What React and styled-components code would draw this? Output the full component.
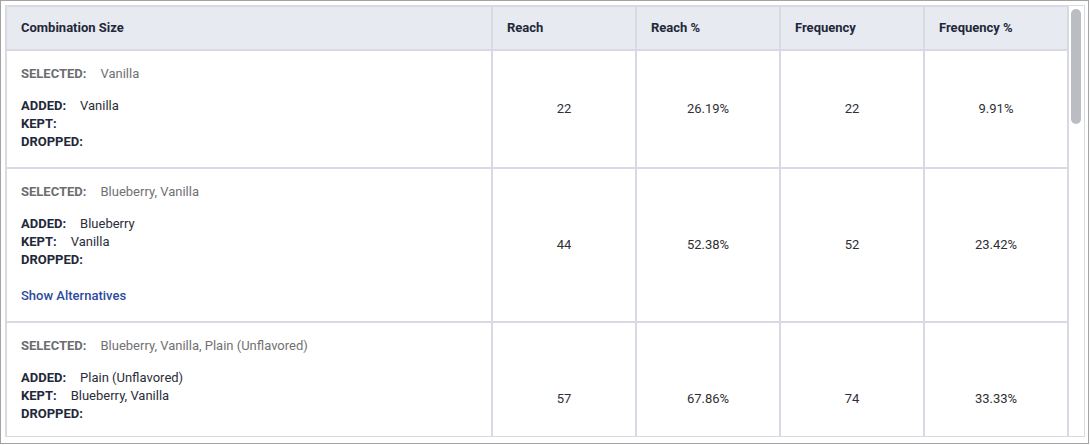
import React from "react";
import styled, { createGlobalStyle } from "styled-components";

const GlobalStyle = createGlobalStyle`
  *, *::before, *::after { box-sizing: border-box; }
  html, body { margin: 0; padding: 0; background: #ffffff; }
  body { font-family: Roboto, "Noto Sans", Arial, sans-serif; }
`;

const Frame = styled.div`
  width: 1089px;
  height: 444px;
  border: 1px solid #a3a3a3;
  padding: 4px 3px 6px 4px;
  background: #ffffff;
`;

const Panel = styled.div`
  display: flex;
  width: 1080px;
  height: 432px;
  border: 1px solid #d8d9e2;
`;

const Viewport = styled.div`
  flex: 1;
  overflow: hidden;
`;

const ScrollRail = styled.div`
  flex: 0 0 16px;
  border-left: 1px solid #d8d9e2;
  background: #ffffff;
  padding: 3px 0 0 2px;
`;

const ScrollThumb = styled.div`
  width: 10px;
  height: 115px;
  border-radius: 5px;
  background: #babdc1;
`;

const Table = styled.table`
  width: 1062px;
  table-layout: fixed;
  border-collapse: separate;
  border-spacing: 0;
  font-size: 13px;
  line-height: 18px;
`;

const HeadCell = styled.th`
  height: 44px;
  padding: 0 14px;
  border: 1px solid #d8d9e2;
  background: #e8eaf2;
  color: #232838;
  font-weight: 700;
  text-align: left;
  vertical-align: middle;
`;

const ComboCell = styled.td`
  padding: 14px 14px 16px;
  border: 1px solid #d8d9e2;
  vertical-align: top;
`;

const NumCell = styled.td`
  padding: 0 14px;
  border: 1px solid #d8d9e2;
  text-align: center;
  vertical-align: middle;
  color: #2f2f33;
`;

const SelectedLine = styled.div`
  color: #707174;
  margin-bottom: 14px;
`;

const Line = styled.div`
  color: #2a2e3b;
`;

const Label = styled.span`
  font-weight: 700;
  margin-right: 14px;
  color: ${(p) => (p.$muted ? "#6c6d70" : "#222839")};
`;

const AltLink = styled.a`
  display: inline-block;
  margin-top: 18px;
  color: #2d4a9e;
  font-weight: 500;
  text-decoration: none;
  cursor: pointer;
`;

const columns = [
  { key: "combo", title: "Combination Size", width: 486 },
  { key: "reach", title: "Reach", width: 144 },
  { key: "reachPct", title: "Reach %", width: 144 },
  { key: "freq", title: "Frequency", width: 144 },
  { key: "freqPct", title: "Frequency %", width: 144 },
];

const rows = [
  { selected: "Vanilla", added: "Vanilla", kept: "", dropped: "", alt: false, reach: "22", reachPct: "26.19%", freq: "22", freqPct: "9.91%" },
  { selected: "Blueberry, Vanilla", added: "Blueberry", kept: "Vanilla", dropped: "", alt: true, reach: "44", reachPct: "52.38%", freq: "52", freqPct: "23.42%" },
  { selected: "Blueberry, Vanilla, Plain (Unflavored)", added: "Plain (Unflavored)", kept: "Blueberry, Vanilla", dropped: "", alt: true, reach: "57", reachPct: "67.86%", freq: "74", freqPct: "33.33%" },
];

export default function App() {
  return (
    <>
      <GlobalStyle />
      <Frame>
        <Panel>
          <Viewport>
            <Table>
              <colgroup>
                {columns.map((c) => (
                  <col key={c.key} style={{ width: c.width }} />
                ))}
              </colgroup>
              <thead>
                <tr>
                  {columns.map((c) => (
                    <HeadCell key={c.key}>{c.title}</HeadCell>
                  ))}
                </tr>
              </thead>
              <tbody>
                {rows.map((r, i) => (
                  <tr key={i}>
                    <ComboCell>
                      <SelectedLine>
                        <Label $muted>SELECTED:</Label>
                        {r.selected}
                      </SelectedLine>
                      <Line>
                        <Label>ADDED:</Label>
                        {r.added}
                      </Line>
                      <Line>
                        <Label>KEPT:</Label>
                        {r.kept}
                      </Line>
                      <Line>
                        <Label>DROPPED:</Label>
                        {r.dropped}
                      </Line>
                      {r.alt && <AltLink>Show Alternatives</AltLink>}
                    </ComboCell>
                    <NumCell>{r.reach}</NumCell>
                    <NumCell>{r.reachPct}</NumCell>
                    <NumCell>{r.freq}</NumCell>
                    <NumCell>{r.freqPct}</NumCell>
                  </tr>
                ))}
              </tbody>
            </Table>
          </Viewport>
          <ScrollRail>
            <ScrollThumb />
          </ScrollRail>
        </Panel>
      </Frame>
    </>
  );
}
